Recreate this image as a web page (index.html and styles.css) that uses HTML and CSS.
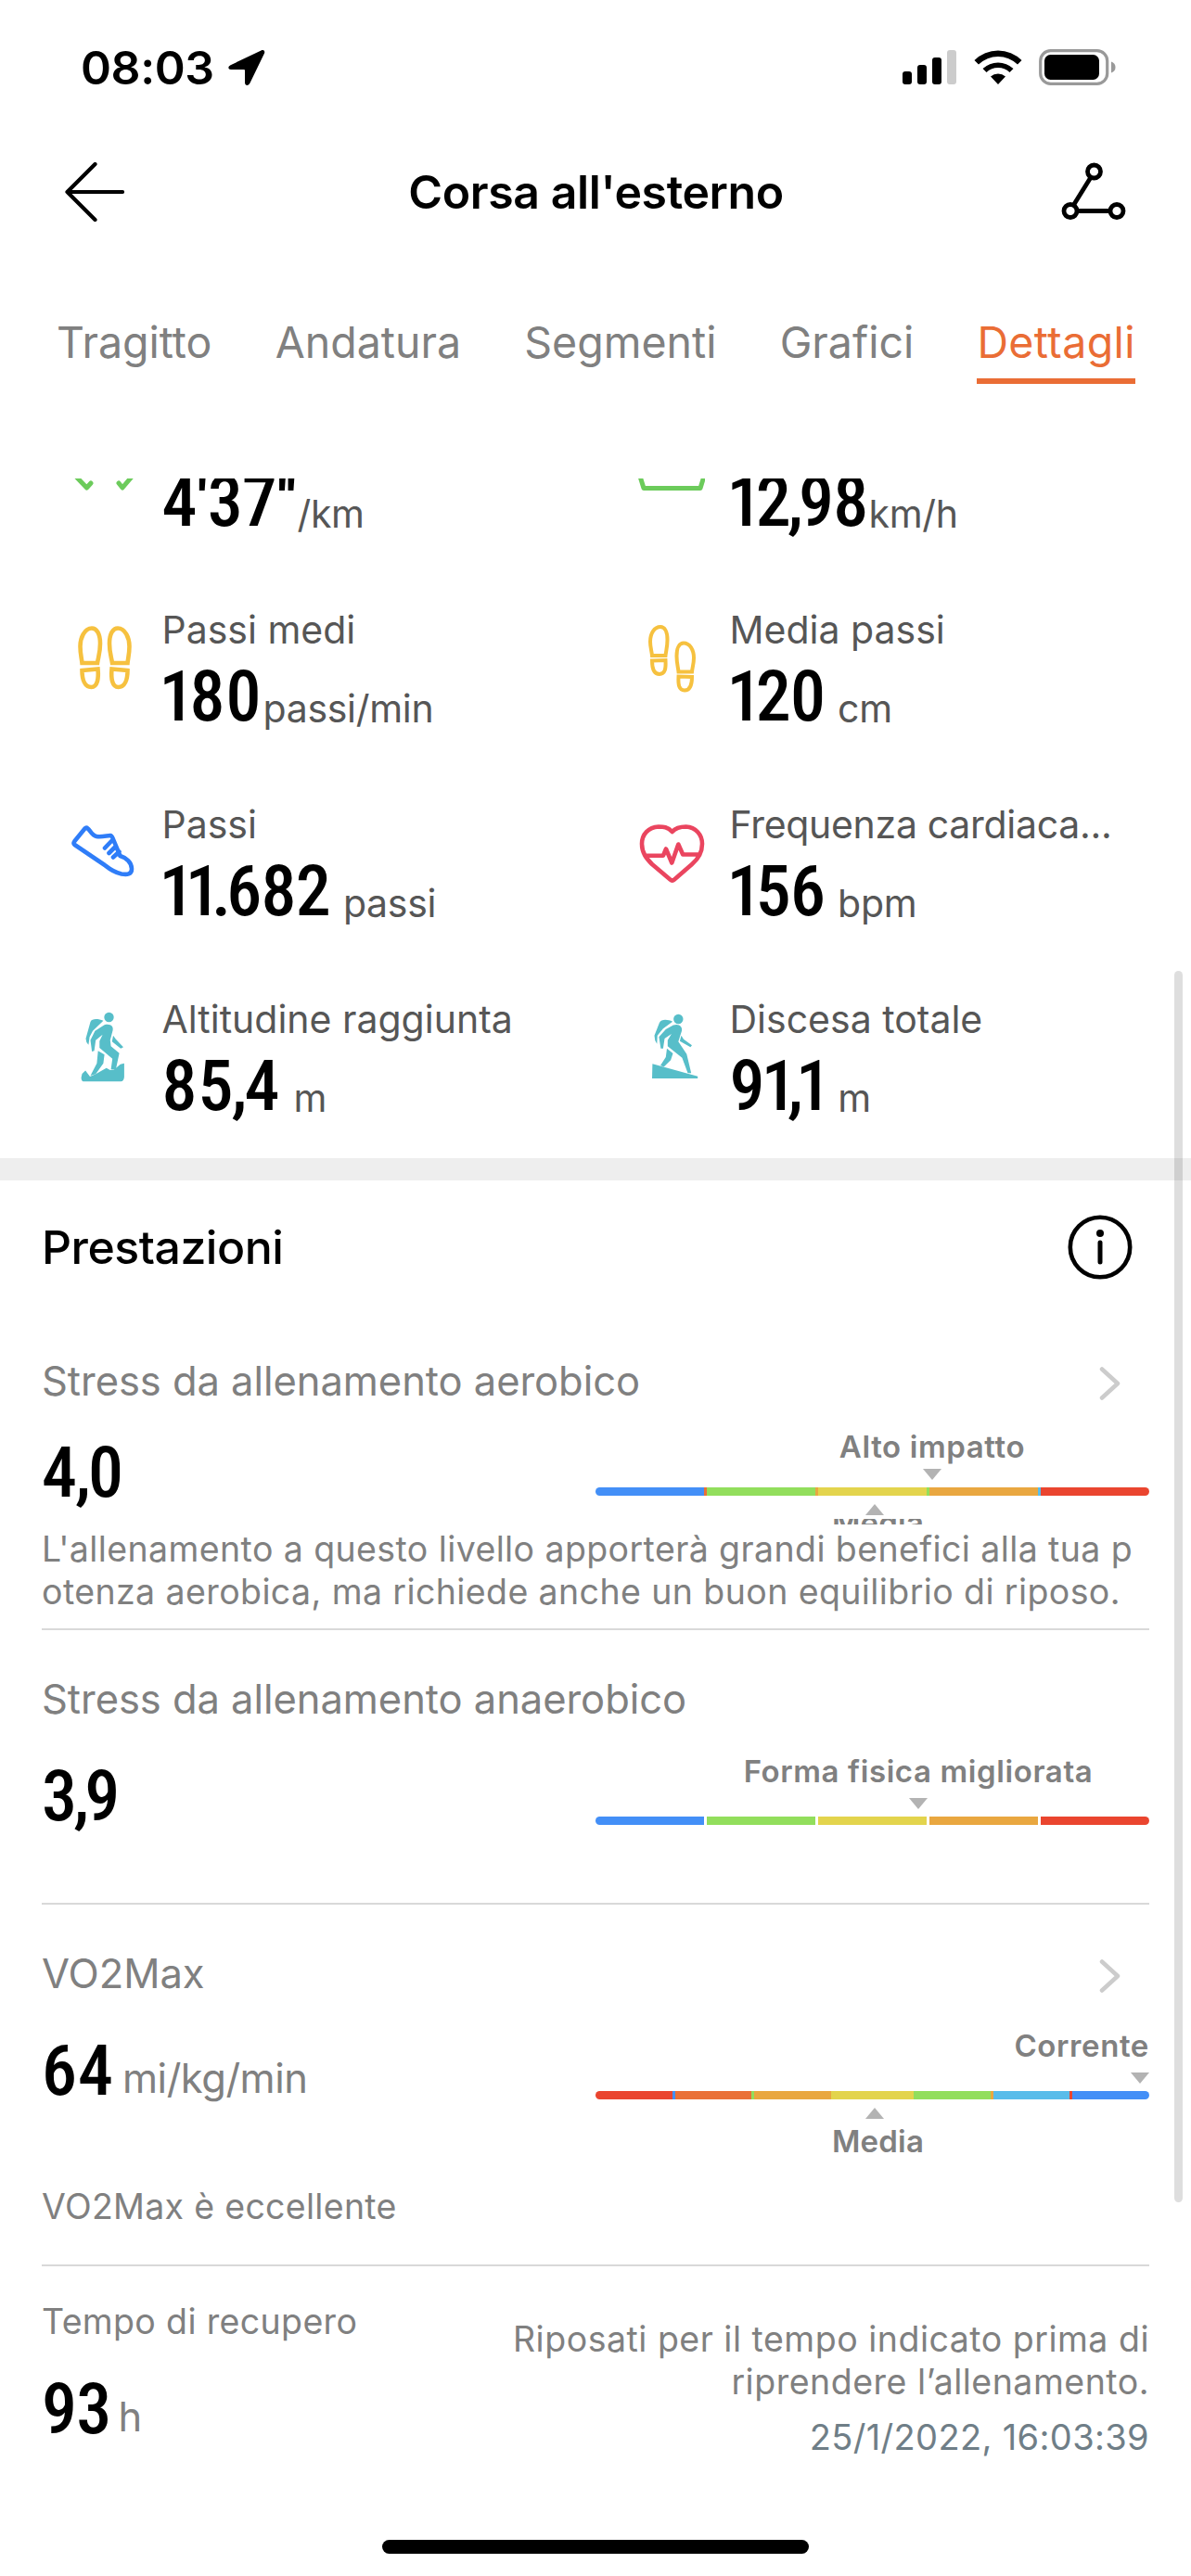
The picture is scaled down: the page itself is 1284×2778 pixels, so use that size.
FILE: index.html
```html
<!DOCTYPE html>
<html lang="it">
<head>
  <meta charset="UTF-8">
  <meta name="viewport" content="width=device-width, initial-scale=1.0">
  <title>Corsa all'esterno</title>
  <link rel="stylesheet" href="styles.css">
</head>
<body>
  <div class="screen">
    <div class="status-bar">
      <span class="time">08:03</span>
      <svg class="location" width="40" height="40" viewBox="0 0 40 40"><path d="M35.5 1.5 2.5 17.2C-.8 19 0 22 3 22H17Q18 22 18 23V36C18 39.5 22 40 23.5 36.5L39 4.5C40 1.8 38 .3 35.5 1.5Z"/></svg>
      <svg class="indicators" width="232" height="40" viewBox="0 0 232 40">
        <rect x="1" y="24" width="10" height="14" rx="3"/>
        <rect x="17" y="17" width="10" height="21" rx="3"/>
        <rect x="33" y="9" width="10" height="29" rx="3"/>
        <rect x="49" y="1" width="10" height="37" rx="3" fill="#ccc"/>
        <path d="M104 38 96 29.500a12 12 0 0 1 16 0ZM91.500 25 87.500 21a24 24 0 0 1 33 0L116.500 25a18 18 0 0 0-25 0ZM83 16.500 78.500 12a36 36 0 0 1 51 0L125 16.500a30 30 0 0 0-42 0Z"/>
        <rect x="149.700" y="1.700" width="72" height="35.600" rx="11" fill="none" stroke="#999" stroke-width="3.200"/>
        <rect x="154" y="6" width="59" height="27" rx="6.500"/>
        <path d="M226 13.500q4.500 1.500 4.500 6t-4.500 6Z" fill="#999"/>
      </svg>
    </div>

    <div class="header">
      <svg width="64" height="64" viewBox="0 0 64 64" class="line"><path d="M32.500 2 2.500 32 32.500 62M2.500 32H62" stroke-width="4.200"/></svg>
      <h1>Corsa all'esterno</h1>
      <svg width="70" height="64" viewBox="0 0 70 64" class="line"><path d="M31.500 17 13.500 46M18 52.500H52" stroke-width="4.800"/><g stroke-width="4.800"><circle cx="35.500" cy="10" r="7"/><circle cx="10" cy="52.500" r="7"/><circle cx="60" cy="52.500" r="7"/></g></svg>
    </div>

    <div class="tabs">
      <span class="tab">Tragitto</span>
      <span class="tab">Andatura</span>
      <span class="tab">Segmenti</span>
      <span class="tab">Grafici</span>
      <span class="tab active">Dettagli</span>
    </div>

    <div class="content">
      <div class="stats">
        <div class="stat">
          <svg class="icon green" viewBox="0 0 72 120"><path d="M6 70 17.500 82 22 77M52 77 56 82 67 69"/></svg>
          <div>
            <div class="label"></div>
            <div class="value"><span class="num tight">4'37''</span><span class="unit near">/km</span></div>
          </div>
        </div>
        <div class="stat">
          <svg class="icon green" viewBox="0 0 72 120"><path d="M1.500 68 6 82.500H67L71.500 68"/></svg>
          <div>
            <div class="label"></div>
            <div class="value"><span class="num tight"><b>1</b>2<i>,</i>98</span><span class="unit near">km/h</span></div>
          </div>
        </div>
        <div class="stat">
          <svg class="icon yellow" viewBox="0 0 72 120">
            <path id="foot" d="M12.500 61H29C30 54 32 50 32 40C32 29 28 23.500 23 23.500C15 23.500 10.500 34 10.500 43C10.500 51 12 56 12.500 61ZM12.500 69 29.500 67.500C30.500 78 29 87 22.500 87C15.500 87 12.500 79 12.500 69Z"/>
            <use href="#foot" transform="translate(74 0) scale(-1 1)"/>
          </svg>
          <div>
            <div class="label">Passi medi</div>
            <div class="value"><span class="num"><b>1</b>80</span><span class="unit near">passi/min</span></div>
          </div>
        </div>
        <div class="stat">
          <svg class="icon yellow" viewBox="0 0 72 120">
            <path id="step" stroke-width="4" d="M15 53H29.500C30 48 31.500 44 31.500 36C31.500 27 28.500 22 24 22C17.500 22 13 29 13 38C13 44 14.500 48 15 53ZM15 58.500 29.500 58C30 67 29 73 23 73C17 73 15 67 15 58.500Z"/>
            <use href="#step" transform="translate(73 17.500) scale(-1 1)"/>
          </svg>
          <div>
            <div class="label">Media passi</div>
            <div class="value"><span class="num tight"><b>1</b>20</span><span class="unit">cm</span></div>
          </div>
        </div>
        <div class="stat">
          <svg class="icon blue" viewBox="0 0 72 120"><path d="M18.600 29.500C21 31 23 37 28 38C33 39 38 37.500 43 37C44.500 37 45 38.500 46 41L53.500 59C60 61 66 66 66 73C66 79 61 79.500 55 78.500C46 76.500 42 73 37 69L4.500 47C3 46 3.500 44.500 4.500 43L15.500 29.500C16.500 28.500 17.500 28.500 18.600 29.500ZM45.600 41.500 37 50.500M49 48.500 41.500 56M52.500 54.500 46 60.500"/></svg>
          <div>
            <div class="label">Passi</div>
            <div class="value"><span class="num tight"><b>1</b><b>1</b><i>.</i>682</span><span class="unit">passi</span></div>
          </div>
        </div>
        <div class="stat">
          <svg class="icon red" viewBox="0 0 72 120"><path d="M36.700 33C32 27.500 27 27.500 22 27.500C11 28 4 36 4 46C4 56 9 62 15 68L34.500 84.500Q36.700 86.500 39 84.500L58 68C65 62 69 56 69 46C69 36 62 28 51.500 27.500C46 27.500 41 28 36.700 33ZM8.500 58.700H27L30 51.500 36.300 66.500 43.300 46.500 48.200 57.500H65.400"/></svg>
          <div>
            <div class="label long">Frequenza cardiaca...</div>
            <div class="value"><span class="num tight"><b>1</b>56</span><span class="unit">bpm</span></div>
          </div>
        </div>
        <div class="stat">
          <svg class="icon teal" viewBox="0 0 72 120">
            <circle cx="41.500" cy="23" r="5.200"/>
            <path d="M35.400 26.700C30 24.500 23 24 21.500 28L16.500 46Q16.500 50 19.400 52.700L20.600 44.300 24 37.700Z"/>
            <path d="M36.600 31.300C43 29.500 46.500 33 45.600 37L42.800 47.700 43.600 54.300 52.600 61.700 48.900 79.300H43.600L45.200 67.700 31.300 56V48.700L34.600 41.700 27.200 47.700 25.600 59.300 23.100 60 21.500 47.700 26.400 37.700Z"/>
            <path d="M29.700 59.300 36.600 63.300 35.400 72.700 27.200 84.300 21.500 86 28.400 72.700ZM46 42.700 48.900 46.700 57 55.300 54.200 56.700 44.800 49.300Z"/>
            <path d="M11.600 88 12.500 84 16.100 80.500 21 87 27.200 84.300 38.700 77.700 42.800 80 46.900 79.500 53.800 73.700 57.900 72.700V87.500Q57.500 92 54.200 92.300H14Q11.600 92 11.600 88Z"/>
          </svg>
          <div>
            <div class="label">Altitudine raggiunta</div>
            <div class="value"><span class="num">85<i>,</i>4</span><span class="unit">m</span></div>
          </div>
        </div>
        <div class="stat">
          <svg class="icon teal" viewBox="0 0 72 120">
            <circle cx="43.300" cy="25" r="5.200"/>
            <path d="M37.100 27.700C32 25.500 25 24.500 22.800 29.300L17.500 42.700Q17.500 48 20.300 51.700L20.700 42.700 26.900 35.300Z"/>
            <path d="M37.900 31.500C44 29.500 48 33 47 37.700L43.300 49.300 52.300 62.700 57.200 83.300H53.500L47.400 66.700 31.800 54.300V47.700L35.900 41 28.500 46 26.900 56.700H24.400L22.400 44.300 29.800 36Z"/>
            <path d="M31 56.700 37.500 62 35.100 69.300 27.700 76.500 24 75 29.800 66ZM46.500 42.700 49 46.700 58 53.300 56.400 55.300 44.900 48.700Z"/>
            <path d="M15.400 73.300 64.200 86.700V89H15Z"/>
          </svg>
          <div>
            <div class="label">Discesa totale</div>
            <div class="value"><span class="num tight">9<b>1</b><i>,</i><b>1</b></span><span class="unit">m</span></div>
          </div>
        </div>
      </div>

      <div class="performance">
        <div class="section-title">
          <h2>Prestazioni</h2>
          <svg width="70" height="70" viewBox="0 0 70 70" class="line"><circle cx="35" cy="35" r="32.200" stroke-width="4.600"/><path d="M35 30V51" stroke-width="5"/><circle cx="35" cy="20" r="4" fill="#000" stroke="none"/></svg>
        </div>

        <div class="metric aerobic">
          <div class="metric-title">Stress da allenamento aerobico
            <svg class="chevron" width="24" height="36" viewBox="0 0 24 36"><path d="M3 2.500 20 18 3 33.500"/></svg>
          </div>
          <div class="metric-body">
            <div class="value"><span class="num">4<i>,</i>0</span></div>
            <div class="gauge">
              <div class="marker down" style="--at: 363px">Alto impatto</div>
              <div class="bar">
                <span class="c-blue"></span><em class="c-coral"></em><span class="c-green"></span><em class="c-orange"></em><span class="c-yellow"></span><em class="c-green"></em><span class="c-orange"></span><em class="c-sky"></em><span class="c-red"></span>
              </div>
              <div class="marker up" style="--at: 301px"><span>Media</span></div>
            </div>
          </div>
          <p class="note">L'allenamento a questo livello apporterà grandi benefici alla tua p<br>otenza aerobica, ma richiede anche un buon equilibrio di riposo.</p>
        </div>

        <div class="metric anaerobic">
          <div class="metric-title">Stress da allenamento anaerobico</div>
          <div class="metric-body">
            <div class="value"><span class="num tight">3<i>,</i>9</span></div>
            <div class="gauge">
              <div class="marker down" style="--at: 348px">Forma fisica migliorata</div>
              <div class="bar">
                <span class="c-blue"></span><em></em><span class="c-green"></span><em></em><span class="c-yellow"></span><em></em><span class="c-orange"></span><em></em><span class="c-red"></span>
              </div>
            </div>
          </div>
        </div>

        <div class="metric vo2">
          <div class="metric-title">VO2Max
            <svg class="chevron" width="24" height="36" viewBox="0 0 24 36"><path d="M3 2.500 20 18 3 33.500"/></svg>
          </div>
          <div class="metric-body">
            <div class="value"><span class="num">64</span><span class="unit">mi/kg/min</span></div>
            <div class="gauge">
              <div class="marker down end">Corrente</div>
              <div class="bar">
                <span class="c-red"></span><em class="c-blue"></em><span class="c-coral"></span><em class="c-green"></em><span class="c-orange"></span><em class="c-yellow"></em><span class="c-yellow"></span><em class="c-yellow"></em><span class="c-green"></span><em class="c-orange"></em><span class="c-sky"></span><em class="c-red"></em><span class="c-blue"></span>
              </div>
              <div class="marker up" style="--at: 301px"><span>Media</span></div>
            </div>
          </div>
          <p class="note">VO2Max è eccellente</p>
        </div>

        <div class="recovery">
          <div>
            <p>Tempo di recupero</p>
            <div class="value"><span class="num tight">93</span><span class="unit">h</span></div>
          </div>
          <div class="advice">
            <p>Riposati per il tempo indicato prima di<br>riprendere l’allenamento.</p>
            <p class="date">25/1/2022, 16:03:39</p>
          </div>
        </div>
      </div>
    </div>

    <div class="scrollbar"></div>
    <div class="home-bar"></div>
  </div>
</body>
</html>
```
FILE: styles.css
```css
* {
  box-sizing: border-box;
}
body {
  margin: 0;
  background: #fff;
  color: #000;
  font-family: Inter, "Liberation Sans", sans-serif;
}
h1, h2, p {
  margin: 0;
}
svg {
  display: block;
  flex: none;
}
.screen {
  position: relative;
  width: 1284px;
  height: 2778px;
  display: flex;
  flex-direction: column;
  overflow: hidden;
}
.line {
  fill: none;
  stroke: #000;
  stroke-linecap: round;
  stroke-linejoin: round;
}

/* Status bar */
.status-bar {
  height: 146px;
  padding: 0 80px 0 87px;
  display: flex;
  align-items: center;
}
.time {
  font-size: 50px;
  font-weight: 600;
  letter-spacing: -0.4px;
}
.location {
  margin-left: 15px;
}
.indicators {
  margin-left: auto;
}

/* Header */
.header {
  height: 122px;
  padding: 0 70px;
  display: flex;
  align-items: center;
  justify-content: space-between;
}
.header h1 {
  padding-left: 7px;
  font-size: 50px;
  font-weight: 600;
  letter-spacing: -0.4px;
}

/* Tabs */
.tabs {
  height: 146px;
  padding: 71px 60px 0 61px;
  display: flex;
  justify-content: space-between;
}
.tab {
  height: 75px;
  font-size: 46.5px;
  line-height: 60px;
  color: #808080;
}
.tab.active {
  color: #ea6d35;
  letter-spacing: 0.4px;
  border-bottom: 6px solid #ea6d35;
}

/* Stats */
.content {
  margin-top: 102px;
  overflow: hidden;
}
.stats {
  margin-top: -72px;
  padding-left: 76px;
  display: grid;
  grid-template-columns: 612px 1fr;
  grid-auto-rows: 175px;
  row-gap: 35px;
}
.stat {
  display: flex;
  gap: 26.5px;
}
.icon {
  width: 72px;
  height: 120px;
  fill: none;
  stroke-width: 4.6;
  stroke-linecap: round;
  stroke-linejoin: round;
}
.green { stroke: #6ccb5b; stroke-width: 5; }
.yellow { stroke: #f6c13f; stroke-linejoin: miter; }
.blue { stroke: #2f7df8; }
.red { stroke: #ea455f; }
.teal { fill: #57bec9; }
.label {
  height: 50px;
  font-size: 41px;
  line-height: 50px;
  color: #565656;
}
.label.long {
  letter-spacing: -0.3px;
}
.value {
  height: 70px;
  font-family: Roboto, "Liberation Sans", sans-serif;
  font-size: 76px;
  font-stretch: 75%;
  font-weight: 500;
  line-height: 70px;
  white-space: nowrap;
}
.stat .value {
  margin-top: 12px;
}
.num {
  letter-spacing: 1px;
}
.num.tight {
  letter-spacing: -0.8px;
}
/* the 1 and the punctuation sit closer than tabular digits */
.num b {
  font-weight: inherit;
  margin: 0 -6px 0 -3px;
}
.num i {
  font-style: normal;
  margin: 0 -4px 0 -3px;
}
.unit {
  margin-left: 14px;
  font-family: Inter, "Liberation Sans", sans-serif;
  font-size: 41px;
  font-stretch: 100%;
  font-weight: 400;
  line-height: 1;
  letter-spacing: -0.3px;
  vertical-align: -1.5px;
  color: #565656;
}
.unit.near {
  margin-left: 1px;
}

/* Performance */
.performance {
  border-top: 24px solid #eee;
  padding: 0 45px;
}
.section-title {
  height: 144px;
  padding-right: 18px;
  display: flex;
  align-items: center;
  justify-content: space-between;
}
.section-title h2 {
  font-size: 50px;
  font-weight: 500;
  letter-spacing: -0.5px;
}
.metric {
  padding-top: 44px;
  border-bottom: 2px solid #d9d9d9;
}
.metric-title {
  height: 60px;
  padding-right: 30px;
  display: flex;
  align-items: center;
  justify-content: space-between;
  font-size: 43.5px;
  letter-spacing: -0.05px;
  color: #808080;
}
.chevron {
  fill: none;
  stroke: #ccc;
  stroke-width: 4.5;
  stroke-linecap: round;
  stroke-linejoin: round;
  margin-top: 6px;
}
.metric-body {
  display: flex;
  justify-content: space-between;
}
.metric-body .value {
  margin-top: 40px;
}
.metric-body .unit {
  margin-left: 9px;
  font-size: 43.5px;
  letter-spacing: -0.5px;
  vertical-align: 2px;
  color: #808080;
}
.gauge {
  width: 597px;
  padding-top: 28px;
}
.marker {
  width: 400px;
  margin-left: calc(var(--at) - 200px);
  font-size: 33px;
  font-weight: 600;
  line-height: 40px;
  letter-spacing: 0.6px;
  text-align: center;
  color: #808080;
}
.marker::before, .marker::after {
  display: block;
  width: 0;
  margin: 0 auto;
  border: 0 solid transparent;
  border-width: 0 10.5px;
}
.marker.down::after {
  content: "";
  margin-top: 9px;
  margin-bottom: 8px;
  border-top: 12px solid #b3b3b3;
}
.marker.up::before {
  content: "";
  margin-top: 9px;
  margin-bottom: 4px;
  border-bottom: 12px solid #b3b3b3;
}
.marker.up span {
  display: block;
  padding-left: 7px;
  letter-spacing: 0.2px;
}
.marker.end {
  margin-left: auto;
  text-align: right;
}
.marker.end::after {
  margin-right: 0;
}
.bar {
  height: 9px;
  display: flex;
  border-radius: 4.5px;
  overflow: hidden;
}
.bar span {
  flex: 1;
}
.bar em {
  width: 3px;
}
.c-blue { background: #438ff7; }
.c-green { background: #92de5c; }
.c-yellow { background: #e3d44d; }
.c-orange { background: #e9a740; }
.c-coral { background: #ea7037; }
.c-red { background: #ea452f; }
.c-sky { background: #58bcea; }
.note {
  font-size: 37.5px;
  line-height: 46px;
  letter-spacing: 0.4px;
  white-space: nowrap;
  color: #808080;
}
.aerobic {
  padding-top: 42px;
  padding-bottom: 16px;
}
.aerobic .metric-body {
  height: 129px;
}
.aerobic .value {
  margin-top: 34px;
}
.aerobic .gauge {
  padding-top: 21px;
}
.aerobic .marker.down::after {
  margin-top: 4px;
}
.aerobic .marker.up span {
  height: 6px;
  line-height: 8px;
  overflow: hidden;
}
.anaerobic .metric-body {
  height: 190px;
}
.vo2 {
  padding-bottom: 39px;
}
.vo2 .metric-body {
  height: 199px;
}
.vo2 .note {
  letter-spacing: 0.3px;
}

/* Recovery */
.recovery {
  padding-top: 37px;
  display: flex;
  justify-content: space-between;
  font-size: 37.5px;
  line-height: 46px;
  letter-spacing: 0.35px;
  color: #808080;
}
.recovery .value {
  margin-top: 36px;
  color: #000;
}
.recovery .unit {
  margin-left: 8px;
  font-size: 43.5px;
  vertical-align: 2px;
  color: #808080;
}
.advice {
  padding-top: 19px;
  text-align: right;
  letter-spacing: 0.5px;
}
.date {
  margin-top: 13px;
  font-size: 38px;
  letter-spacing: 0.35px;
  color: #6f7e87;
}

.scrollbar {
  position: absolute;
  top: 1047px;
  right: 9px;
  width: 9px;
  height: 1328px;
  border-radius: 5px;
  background: rgba(0, 0, 0, 0.13);
}
.home-bar {
  width: 460px;
  height: 15px;
  margin: auto auto 24px;
  border-radius: 8px;
  background: #000;
}
```
